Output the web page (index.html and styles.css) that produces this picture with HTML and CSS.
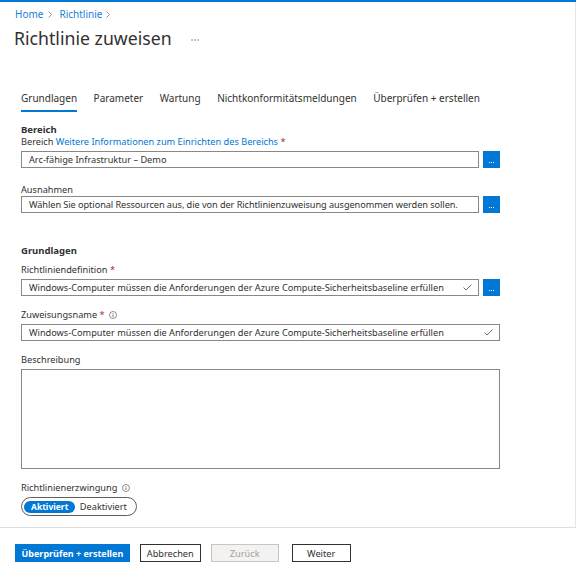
FILE: index.html
```html
<!DOCTYPE html>
<html lang="de">
<head>
<meta charset="utf-8">
<title>Richtlinie zuweisen</title>
<link rel="stylesheet" href="styles.css">
</head>
<body>
<div class="topbar"></div>
<div class="main">
  <header class="header">
    <nav class="breadcrumb">
      <a href="#">Home</a>
      <svg class="chev" width="4" height="7" viewBox="0 0 4 7"><polyline points="0.5,0.5 3.5,3.5 0.5,6.5" fill="none" stroke="#8a8886" stroke-width="0.9"/></svg>
      <a href="#">Richtlinie</a>
      <svg class="chev chev-last" width="4" height="7" viewBox="0 0 4 7"><polyline points="0.5,0.5 3.5,3.5 0.5,6.5" fill="none" stroke="#8a8886" stroke-width="0.9"/></svg>
    </nav>
    <div class="title-row">
      <h1 class="title">Richtlinie zuweisen</h1>
      <svg class="more" width="8" height="2" viewBox="0 0 8 2"><circle cx="1" cy="1" r="0.7" fill="#605e5c"/><circle cx="4" cy="1" r="0.7" fill="#605e5c"/><circle cx="7" cy="1" r="0.7" fill="#605e5c"/></svg>
    </div>
  </header>

  <div class="content">
    <div class="tabs">
      <div class="tab active">Grundlagen</div>
      <div class="tab">Parameter</div>
      <div class="tab">Wartung</div>
      <div class="tab">Nichtkonformitätsmeldungen</div>
      <div class="tab">Überprüfen + erstellen</div>
    </div>

    <h2 class="section-title s1">Bereich</h2>
    <div class="field">
      <div class="label">Bereich <a href="#" class="link">Weitere Informationen zum Einrichten des Bereichs</a> <span class="req">*</span></div>
      <div class="row">
        <div class="input">Arc-fähige Infrastruktur – Demo</div>
        <button class="pick"><svg width="17" height="17" viewBox="0 0 17 17"><rect x="6" y="11" width="1" height="1" fill="#fff"/><rect x="8" y="11" width="1" height="1" fill="#fff"/><rect x="10" y="11" width="1" height="1" fill="#fff"/></svg></button>
      </div>
    </div>

    <div class="field f-aus">
      <div class="label">Ausnahmen</div>
      <div class="row row-tight">
        <div class="input input-tight">Wählen Sie optional Ressourcen aus, die von der Richtlinienzuweisung ausgenommen werden sollen.</div>
        <button class="pick"><svg width="17" height="17" viewBox="0 0 17 17"><rect x="6" y="11" width="1" height="1" fill="#fff"/><rect x="8" y="11" width="1" height="1" fill="#fff"/><rect x="10" y="11" width="1" height="1" fill="#fff"/></svg></button>
      </div>
    </div>

    <h2 class="section-title s2">Grundlagen</h2>
    <div class="field f-def">
      <div class="label">Richtliniendefinition <span class="req">*</span></div>
      <div class="row">
        <div class="input"><span class="val">Windows-Computer müssen die Anforderungen der Azure Compute-Sicherheitsbaseline erfüllen</span><svg class="check" width="9" height="7" viewBox="0 0 9 7"><polyline points="0.5,3.6 3,6 8.5,0.6" fill="none" stroke="#605e5c" stroke-width="0.9"/></svg></div>
        <button class="pick"><svg width="17" height="17" viewBox="0 0 17 17"><rect x="6" y="11" width="1" height="1" fill="#fff"/><rect x="8" y="11" width="1" height="1" fill="#fff"/><rect x="10" y="11" width="1" height="1" fill="#fff"/></svg></button>
      </div>
    </div>

    <div class="field f-std">
      <div class="label">Zuweisungsname <span class="req">*</span> <svg class="info" width="8" height="8" viewBox="0 0 8 8"><circle cx="4" cy="4" r="3.5" fill="none" stroke="#605e5c" stroke-width="0.7"/><rect x="3.6" y="3.4" width="0.8" height="2.6" fill="#605e5c"/><rect x="3.6" y="2" width="0.8" height="0.8" fill="#605e5c"/></svg></div>
      <div class="row">
        <div class="input"><span class="val">Windows-Computer müssen die Anforderungen der Azure Compute-Sicherheitsbaseline erfüllen</span><svg class="check" width="9" height="7" viewBox="0 0 9 7"><polyline points="0.5,3.6 3,6 8.5,0.6" fill="none" stroke="#605e5c" stroke-width="0.9"/></svg></div>
      </div>
    </div>

    <div class="field f-std">
      <div class="label">Beschreibung</div>
      <div class="textarea"></div>
    </div>

    <div class="field f-enf">
      <div class="label">Richtlinienerzwingung <svg class="info" width="8" height="8" viewBox="0 0 8 8"><circle cx="4" cy="4" r="3.5" fill="none" stroke="#605e5c" stroke-width="0.7"/><rect x="3.6" y="3.4" width="0.8" height="2.6" fill="#605e5c"/><rect x="3.6" y="2" width="0.8" height="0.8" fill="#605e5c"/></svg></div>
      <div class="toggle">
        <span class="opt opt-on">Aktiviert</span>
        <span class="opt opt-off">Deaktiviert</span>
      </div>
    </div>
  </div>
</div>
<footer class="footer">
  <button class="btn btn-primary">Überprüfen + erstellen</button>
  <button class="btn">Abbrechen</button>
  <button class="btn btn-disabled">Zurück</button>
  <button class="btn btn-next">Weiter</button>
</footer>
</body>
</html>
```

FILE: styles.css
```css
* {
  box-sizing: border-box;
  margin: 0;
  padding: 0;
}

html, body {
  height: 576px;
}

body {
  font-family: "Noto Sans", "Open Sans", sans-serif;
  color: #323130;
  background: #fff;
  display: flex;
  flex-direction: column;
  overflow: hidden;
}

.topbar {
  flex: none;
  height: 2px;
  background: #0078d4;
}

.main {
  flex: 1;
  border-right: 1px solid #e6e6e6;
}

.header {
  padding: 6px 14px 0 14px;
}

.breadcrumb {
  display: flex;
  align-items: center;
  font-size: 10px;
  line-height: 12px;
  height: 12px;
}

.breadcrumb a {
  color: #1a7fd6;
  text-decoration: none;
  padding-left: 1px;
}

.chev {
  margin: 0 6px 0 5px;
}

.chev-last {
  margin: 0 0 0 4px;
}

.title-row {
  display: flex;
  align-items: center;
  margin-top: 7px;
  height: 22px;
}

.title {
  font-weight: 400;
  font-size: 17.7px;
  line-height: 22px;
  color: #323130;
}

.more {
  margin-left: 19px;
  margin-top: 4px;
}

.content {
  padding-left: 21px;
  width: 500px;
}

.tabs {
  display: flex;
  gap: 16.5px;
  margin-top: 42px;
}

.tab {
  font-size: 10px;
  line-height: 14px;
  padding-bottom: 5px;
  border-bottom: 2px solid transparent;
  white-space: nowrap;
}

.tab.active {
  border-bottom-color: #0078d4;
}

.section-title {
  font-weight: 700;
  font-size: 9.5px;
  line-height: 13px;
}

.s1 {
  margin-top: 10.5px;
}

.s2 {
  margin-top: 31px;
}

.field {
  display: flex;
  flex-direction: column;
}

.f-aus {
  margin-top: 16px;
}

.f-def {
  margin-top: 6.5px;
}

.f-std {
  margin-top: 13px;
}

.f-enf {
  margin-top: 12.5px;
}

.label {
  display: block;
  font-size: 9.2px;
  line-height: 12px;
  height: 12px;
  white-space: nowrap;
}

.link {
  color: #0078d4;
  text-decoration: none;
}

.req {
  color: #a4262c;
}

.info {
  margin-left: 2px;
  vertical-align: -1px;
}

.row {
  display: flex;
  gap: 4px;
  margin-top: 3px;
}

.row-tight {
  margin-top: 0.5px;
}

.input {
  flex: 1;
  min-width: 0;
  height: 17px;
  border: 1px solid #8a8886;
  padding: 0 6px 0 7px;
  display: flex;
  align-items: center;
  font-size: 9.2px;
  white-space: nowrap;
  overflow: hidden;
}

.input-tight {
  letter-spacing: -0.07px;
}

.val {
  flex: 1;
  min-width: 0;
  overflow: hidden;
}

.check {
  flex: none;
  margin-left: 6px;
}

.pick {
  flex: none;
  width: 17px;
  height: 17px;
  background: #0078d4;
  border: none;
  display: block;
}

.pick svg {
  display: block;
}

.textarea {
  margin-top: 3.5px;
  height: 100px;
  border: 1px solid #8a8886;
}

.toggle {
  align-self: flex-start;
  margin-top: 3.5px;
  display: inline-flex;
  align-items: center;
  height: 19px;
  border: 1px solid #605e5c;
  border-radius: 10px;
  padding-left: 2px;
}

.opt {
  white-space: nowrap;
}

.opt-on {
  background: #0078d4;
  color: #fff;
  font-weight: 700;
  font-size: 8.5px;
  height: 12px;
  line-height: 12px;
  border-radius: 6px;
  padding: 0 7px;
}

.opt-off {
  font-size: 9.2px;
  line-height: 12px;
  padding: 0 9px 0 4.5px;
}

.footer {
  flex: none;
  height: 49px;
  border-top: 1px solid #e1dfdd;
  padding: 16px 0 0 15px;
  display: flex;
  gap: 10px;
  align-items: flex-start;
}

.btn {
  height: 18px;
  font-family: inherit;
  font-size: 9.2px;
  border: 1px solid #323130;
  background: #fff;
  color: #323130;
  padding: 0 6px;
  display: flex;
  align-items: center;
  justify-content: center;
  white-space: nowrap;
}

.btn-primary {
  background: #0078d4;
  border-color: #0078d4;
  color: #fff;
  font-weight: 700;
  font-size: 9px;
  padding: 0 5.5px;
}

.btn-disabled {
  width: 68px;
  background: #f3f2f1;
  border-color: #c8c6c4;
  color: #a19f9d;
}

.btn-next {
  width: 59px;
  margin-left: 3px;
}
```
